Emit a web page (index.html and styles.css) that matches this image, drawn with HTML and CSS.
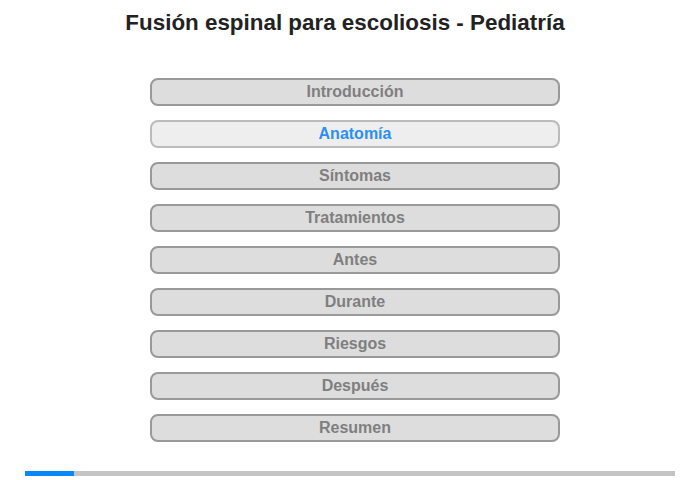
FILE: index.html
```html
<!DOCTYPE html>
<html>

<head>
    <meta charset="utf-8" />
    <title>Fusión espinal para escoliosis - Pediatría</title>
    <link rel="stylesheet" href="styles.css">
</head>

<body>
    <div class="container">
        <h1 class="title">Fusión espinal para escoliosis - Pediatría</h1>
        <div class="menu">
            <div class="item">Introducción</div>
            <div class="item active">Anatomía</div>
            <div class="item">Síntomas</div>
            <div class="item">Tratamientos</div>
            <div class="item">Antes</div>
            <div class="item">Durante</div>
            <div class="item">Riesgos</div>
            <div class="item">Después</div>
            <div class="item">Resumen</div>
        </div>
        <div class="progress">
            <div class="progress-fill" style="width: 49px"></div>
        </div>
    </div>
</body>

</html>
```

FILE: styles.css
```css
* {
    box-sizing: border-box;
    font-family: "Liberation Sans", Arial, sans-serif;
}

body {
    margin: 0;
    background-color: #fff;
}

.container {
    width: 700px;
    display: flex;
    flex-direction: column;
    align-items: center;
}

.title {
    margin: 0 10px 0 0;
    padding-top: 10px;
    font-size: 22.4px;
    line-height: 25px;
    font-weight: bold;
    color: #222;
    text-align: center;
}

.menu {
    margin: 43px 0 0 10px;
    width: 410px;
    display: flex;
    flex-direction: column;
    gap: 14px;
}

.item {
    height: 28px;
    border: 2px solid #999;
    border-radius: 8px;
    background-color: #ddd;
    color: #7f7f7f;
    font-size: 16px;
    font-weight: bold;
    line-height: 24px;
    text-align: center;
}

.item.active {
    border-color: #bbb;
    background-color: #eee;
    color: #2b8ff5;
}

.progress {
    margin-top: 29px;
    width: 650px;
    height: 5px;
    background-color: #c4c4c4;
}

.progress-fill {
    height: 100%;
    background-color: #0a88f8;
}
```
